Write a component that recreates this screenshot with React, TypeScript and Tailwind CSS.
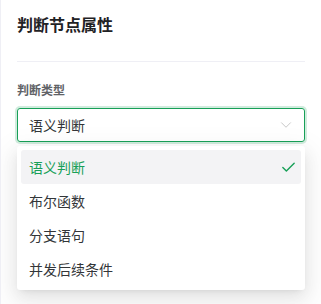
import { Check, ChevronDown } from 'lucide-react';

const OPTIONS = ['语义判断', '布尔函数', '分支语句', '并发后续条件'];

export default function App() {
  const selected = '语义判断';

  return (
    <div
      className="w-[321px] h-[304px] bg-white border-l border-[#efeff5] px-4 overflow-hidden"
      style={{ fontFamily: '"Noto Sans CJK SC", "Noto Sans", sans-serif' }}
    >
      {/* ── Header ── */}
      <h1 className="mt-3 text-[16px] leading-6 font-semibold text-[#1f2225]">判断节点属性</h1>
      <div className="mt-[25px] h-px bg-[#efeff5]" />

      {/* ── Field ── */}
      <div className="mt-[18px] text-[12px] leading-5 font-semibold text-[#606266]">判断类型</div>

      <div className="relative mt-2">
        <div className="h-[34px] flex items-center justify-between pl-[11px] pr-[9px] rounded-[3px] border border-[#18a058] shadow-[0_0_0_2px_rgba(24,160,88,0.2)]">
          <span className="text-[14px] text-[#333639]">{selected}</span>
          <ChevronDown size={18} strokeWidth={1.2} className="text-[#c2c2c2]" />
        </div>

        {/* ── Dropdown menu ── */}
        <div className="absolute left-0 right-0 top-[38px] p-1 bg-white rounded-[3px] shadow-[0_3px_6px_-4px_rgba(0,0,0,0.12),0_6px_16px_0_rgba(0,0,0,0.08),0_9px_28px_8px_rgba(0,0,0,0.05)]">
          {OPTIONS.map(o => (
            <div
              key={o}
              className={
                o === selected
                  ? 'h-[34px] flex items-center justify-between pl-2 pr-[4px] rounded-[3px] bg-[#f3f3f5] text-[14px] text-[#18a058]'
                  : 'h-[34px] flex items-center justify-between pl-2 pr-[4px] rounded-[3px] text-[14px] text-[#333639]'
              }
            >
              <span>{o}</span>
              {o === selected && <Check size={17} strokeWidth={2} className="text-[#18a058]" />}
            </div>
          ))}
        </div>
      </div>
    </div>
  );
}
